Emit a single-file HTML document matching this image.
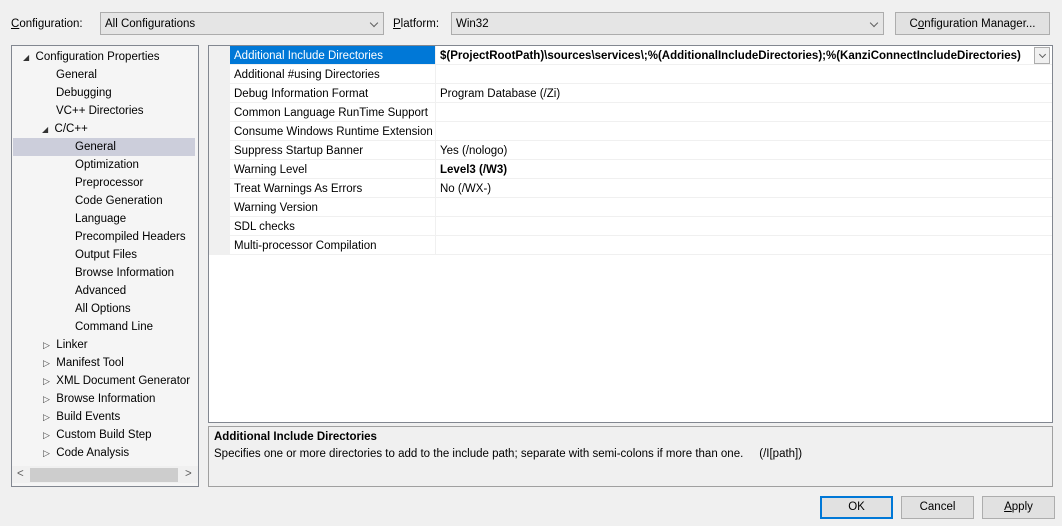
<!DOCTYPE html>
<html><head><style>
*{box-sizing:border-box;margin:0;padding:0}
body{width:1062px;height:526px;background:#f0f0f0;font-family:"Liberation Sans",sans-serif;font-size:11.5px;color:#000;position:relative;overflow:hidden}
.a{position:absolute;white-space:nowrap}
.combo{position:absolute;border:1px solid #acacac;background:#e5e5e5;height:23px;padding:5px 4px;}
.btn{position:absolute;border:1px solid #adadad;background:#e1e1e1;text-align:center;height:23px;line-height:21px}
.chev{position:absolute;right:6px;top:7px;width:6px;height:6px;border-right:1px solid #606060;border-bottom:1px solid #606060;transform:rotate(45deg)}
.tree{position:absolute;left:11px;top:45px;width:188px;height:442px;border:1px solid #828790;background:#f5f5f5}
.tr{position:absolute;height:18px;line-height:18px;white-space:nowrap}
.grid{position:absolute;left:208px;top:45px;width:845px;height:378px;border:1px solid #828790;background:#fff}
.row{position:absolute;left:21px;width:822px;height:19px;line-height:20px;border-bottom:1px solid #f0f0f0}
.row .n{position:absolute;left:0;width:206px;padding-left:4px;border-right:1px solid #f0f0f0;height:18px;overflow:hidden}
.row .v{position:absolute;left:207px;padding-left:3px}
</style></head><body>
<div class="a" style="left:11px;top:18px"><u>C</u>onfiguration:</div>
<div class="combo" style="left:100px;top:12px;width:284px">All Configurations<div class="chev"></div></div>
<div class="a" style="left:393px;top:18px"><u>P</u>latform:</div>
<div class="combo" style="left:451px;top:12px;width:433px">Win32<div class="chev"></div></div>
<div class="btn" style="left:895px;top:12px;width:155px;line-height:22px">C<u>o</u>nfiguration Manager...</div>

<div class="tree">
<div class="tr" style="left:11px;top:2px"><span style="font-size:8px;color:#333">◢</span>&nbsp; Configuration Properties</div>
<div class="tr" style="left:44px;top:20px">General</div>
<div class="tr" style="left:44px;top:38px">Debugging</div>
<div class="tr" style="left:44px;top:56px">VC++ Directories</div>
<div class="tr" style="left:30px;top:74px"><span style="font-size:8px;color:#333">◢</span>&nbsp; C/C++</div>
<div class="tr" style="left:1px;top:92px;width:182px;background:#cccedb;padding-left:62px">General</div>
<div class="tr" style="left:63px;top:110px">Optimization</div>
<div class="tr" style="left:63px;top:128px">Preprocessor</div>
<div class="tr" style="left:63px;top:146px">Code Generation</div>
<div class="tr" style="left:63px;top:164px">Language</div>
<div class="tr" style="left:63px;top:182px">Precompiled Headers</div>
<div class="tr" style="left:63px;top:200px">Output Files</div>
<div class="tr" style="left:63px;top:218px">Browse Information</div>
<div class="tr" style="left:63px;top:236px">Advanced</div>
<div class="tr" style="left:63px;top:254px">All Options</div>
<div class="tr" style="left:63px;top:272px">Command Line</div>
<div class="tr" style="left:31px;top:290px"><span style="font-size:9px;color:#444">▷</span>&nbsp; Linker</div>
<div class="tr" style="left:31px;top:308px"><span style="font-size:9px;color:#444">▷</span>&nbsp; Manifest Tool</div>
<div class="tr" style="left:31px;top:326px"><span style="font-size:9px;color:#444">▷</span>&nbsp; XML Document Generator</div>
<div class="tr" style="left:31px;top:344px"><span style="font-size:9px;color:#444">▷</span>&nbsp; Browse Information</div>
<div class="tr" style="left:31px;top:362px"><span style="font-size:9px;color:#444">▷</span>&nbsp; Build Events</div>
<div class="tr" style="left:31px;top:380px"><span style="font-size:9px;color:#444">▷</span>&nbsp; Custom Build Step</div>
<div class="tr" style="left:31px;top:398px"><span style="font-size:9px;color:#444">▷</span>&nbsp; Code Analysis</div>
<div style="position:absolute;left:0;top:420px;width:186px;height:17px;background:#f0f0f0"></div>
<div style="position:absolute;left:18px;top:422px;width:148px;height:14px;background:#cdcdcd"></div>
<div class="tr" style="left:5px;top:419px;color:#606060">&lt;</div>
<div class="tr" style="left:173px;top:419px;color:#606060">&gt;</div>
</div>

<div class="grid">
<div style="position:absolute;left:0;top:0;width:21px;height:209px;background:#f0f0f0"></div>
<div class="row" style="top:0"><div class="n" style="background:#0078d7;color:#fff">Additional Include Directories</div><div class="v" style="font-weight:bold">$(ProjectRootPath)\sources\services\;%(AdditionalIncludeDirectories);%(KanziConnectIncludeDirectories)</div>
<div style="position:absolute;left:804px;top:1px;width:16px;height:17px;border:1px solid #acacac;background:#f0f0f0"><div class="chev" style="right:4px;top:4px;width:5px;height:5px"></div></div></div>
<div class="row" style="top:19px"><div class="n">Additional #using Directories</div></div>
<div class="row" style="top:38px"><div class="n">Debug Information Format</div><div class="v">Program Database (/Zi)</div></div>
<div class="row" style="top:57px"><div class="n">Common Language RunTime Support</div></div>
<div class="row" style="top:76px"><div class="n">Consume Windows Runtime Extension</div></div>
<div class="row" style="top:95px"><div class="n">Suppress Startup Banner</div><div class="v">Yes (/nologo)</div></div>
<div class="row" style="top:114px"><div class="n">Warning Level</div><div class="v" style="font-weight:bold">Level3 (/W3)</div></div>
<div class="row" style="top:133px"><div class="n">Treat Warnings As Errors</div><div class="v">No (/WX-)</div></div>
<div class="row" style="top:152px"><div class="n">Warning Version</div></div>
<div class="row" style="top:171px"><div class="n">SDL checks</div></div>
<div class="row" style="top:190px"><div class="n">Multi-processor Compilation</div></div>
</div>

<div style="position:absolute;left:208px;top:426px;width:845px;height:61px;border:1px solid #a0a0a0;background:#f0f0f0">
<div class="a" style="left:5px;top:4px;font-weight:bold">Additional Include Directories</div>
<div class="a" style="left:5px;top:21px">Specifies one or more directories to add to the include path; separate with semi-colons if more than one.&nbsp;&nbsp;&nbsp;&nbsp; (/I[path])</div>
</div>

<div class="btn" style="left:820px;top:496px;width:73px;border:2px solid #0078d7;line-height:19px">OK</div>
<div class="btn" style="left:901px;top:496px;width:73px">Cancel</div>
<div class="btn" style="left:982px;top:496px;width:73px"><u>A</u>pply</div>
</body></html>
